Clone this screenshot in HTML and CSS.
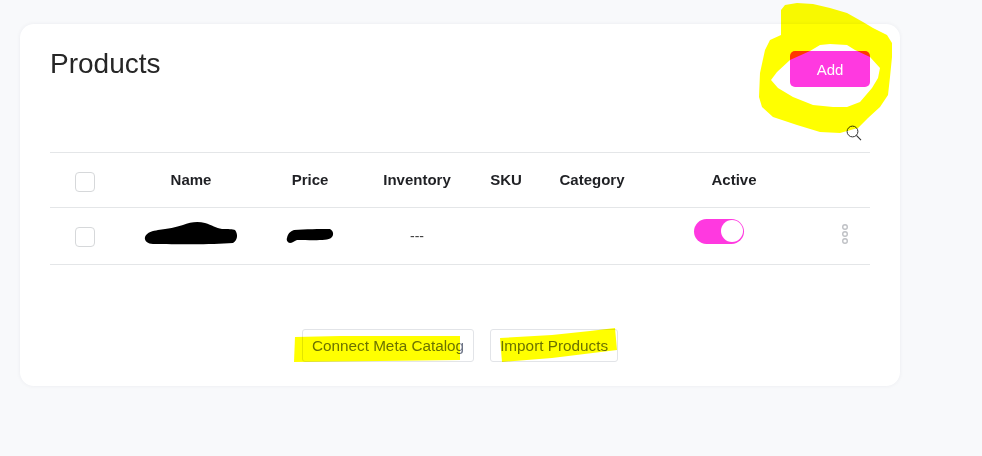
FILE: index.html
```html
<!DOCTYPE html>
<html lang="en">
<head>
<meta charset="utf-8">
<title>Products</title>
<link rel="stylesheet" href="styles.css">
</head>
<body>
<main class="card">
  <header class="card-head">
    <h1 class="title">Products</h1>
    <button class="add-btn">Add</button>
  </header>
  <div class="search-row">
    <svg class="search-icon" viewBox="0 0 16 16" width="16" height="16" aria-hidden="true">
      <circle cx="6.5" cy="6.5" r="5.4" fill="none" stroke="#333" stroke-width="1"/>
      <path d="M10.4 10.4 15 15.2" fill="none" stroke="#333" stroke-width="1.1"/>
    </svg>
  </div>
  <div class="table">
    <div class="row row-head">
      <div class="cell"><span class="check"></span></div>
      <div class="cell">Name</div>
      <div class="cell">Price</div>
      <div class="cell">Inventory</div>
      <div class="cell">SKU</div>
      <div class="cell">Category</div>
      <div class="cell">Active</div>
      <div class="cell"></div>
    </div>
    <div class="row row-body">
      <div class="cell"><span class="check"></span></div>
      <div class="cell"></div>
      <div class="cell"></div>
      <div class="cell dash">---</div>
      <div class="cell"></div>
      <div class="cell"></div>
      <div class="cell"><span class="toggle"><span class="knob"></span></span></div>
      <div class="cell">
        <svg class="kebab" viewBox="0 0 8 22" width="8" height="22" aria-hidden="true">
          <circle cx="4" cy="4" r="2.3"/>
          <circle cx="4" cy="11" r="2.3"/>
          <circle cx="4" cy="18" r="2.3"/>
        </svg>
      </div>
    </div>
  </div>
  <div class="actions">
    <button class="ghost-btn">Connect Meta Catalog</button>
    <button class="ghost-btn">Import Products</button>
  </div>
</main>

<svg class="marks" viewBox="0 0 982 456" width="982" height="456" aria-hidden="true">
  <g fill="#ffff00">
    <path fill-rule="evenodd" d="M781 10 L785 5 L797 3 L813 4 L830 8 L847 13 L863 22 L873 28 L887 35 L892 43 L892 57 L890 77 L888 95 L880 107 L868 118 L858 128 L840 133 L820 132 L797 125 L773 117 L762 107 L759 97 L760 73 L765 50 L770 40 L781 35 Z
    M771 80 L777 72 L790 60 L810 51 L820 45 L830 44 L847 45 L855 50 L870 57 L880 68 L878 78 L872 88 L860 102 L847 107 L833 107 L813 105 L793 97 L778 88 Z"/>
    <path d="M295 337 L340 336 L460 336 L460 360 L380 361 L294 362 Z"/>
    <path d="M500 338 L552 335 L590 331 L615 328 L617 350 L552 358 L502 362 Z"/>
  </g>
  <g fill="#000">
    <path d="M145 237 C147 232 153 231 158 230 C168 229 176 227 183 225 C190 222 198 221 205 223 C212 225 216 228 222 229 C228 229 233 229 235 230 C238 234 238 240 233 243 C210 245 175 244 153 244 C148 244 144 241 145 237 Z"/>
    <path d="M287 238 C288 233 291 231 294 230 C305 229 320 229 330 229 C334 231 334 236 331 238 C328 241 310 240 297 240 C294 241 292 243 290 243 C288 243 286 240 287 238 Z"/>
  </g>
</svg>
</body>
</html>
```

FILE: styles.css
```css
* { box-sizing: border-box; }

html, body {
  margin: 0;
  height: 100%;
  background: #f8f9fb;
  overflow: hidden;
}

body {
  position: relative;
  padding: 24px 0 0 20px;
  font-family: "Liberation Sans", Arial, sans-serif;
  color: #222;
}

.card {
  width: 880px;
  height: 362px;
  padding: 27px 30px 0;
  background: #fff;
  border-radius: 14px;
  box-shadow: 0 0 4px rgba(30, 40, 60, 0.06);
}

.card-head {
  display: flex;
  justify-content: space-between;
  align-items: flex-start;
  height: 72px;
}

.title {
  margin: 0;
  font-size: 28px;
  line-height: 26px;
  font-weight: 400;
  color: #262626;
}

.add-btn {
  width: 80px;
  height: 36px;
  border: 0;
  border-radius: 5px;
  background: #ff39e0;
  color: #fff;
  font: 15px "Liberation Sans", Arial, sans-serif;
}

.search-row {
  display: flex;
  justify-content: flex-end;
  height: 29px;
  padding: 2px 0 0;
}

.search-icon { display: block; margin-right: 8px; }

.row {
  display: grid;
  grid-template-columns: 70px 142px 96px 118px 60px 112px 172px 50px;
  align-items: center;
  border-top: 1px solid #e4e6e8;
}

.row-head {
  height: 55px;
  padding-bottom: 2px;
  font-size: 15px;
  font-weight: 700;
  color: #1f2024;
}

.row-body {
  height: 58px;
  border-bottom: 1px solid #e4e6e8;
}

.cell {
  display: flex;
  justify-content: center;
  align-items: center;
}

.check {
  display: block;
  width: 20px;
  height: 20px;
  border: 1px solid #d6d8da;
  border-radius: 4px;
  background: #fff;
}

.row-head .check { margin-top: 6px; }
.row-body .check { margin-top: 2px; }

.dash { font-size: 14px; color: #444; }

.toggle {
  display: flex;
  justify-content: flex-end;
  align-items: center;
  width: 50px;
  height: 25px;
  margin: -10px 30px 0 0;
  padding-right: 1.5px;
  border-radius: 13px;
  background: #ff39e0;
}

.knob {
  display: block;
  width: 22px;
  height: 22px;
  border-radius: 50%;
  background: #fff;
}

.kebab {
  display: block;
  margin-top: -4px;
  fill: none;
  stroke: #bfc1c5;
  stroke-width: 1.4;
}

.actions {
  display: flex;
  justify-content: center;
  gap: 16px;
  margin-top: 64px;
}

.ghost-btn {
  height: 33px;
  padding: 0 9px;
  border: 1px solid #e2e4e8;
  border-radius: 3px;
  background: #fff;
  color: #6b7285;
  font: 15.3px "Liberation Sans", Arial, sans-serif;
}

.marks {
  position: absolute;
  top: 0;
  left: 0;
  pointer-events: none;
  mix-blend-mode: multiply;
}
```
